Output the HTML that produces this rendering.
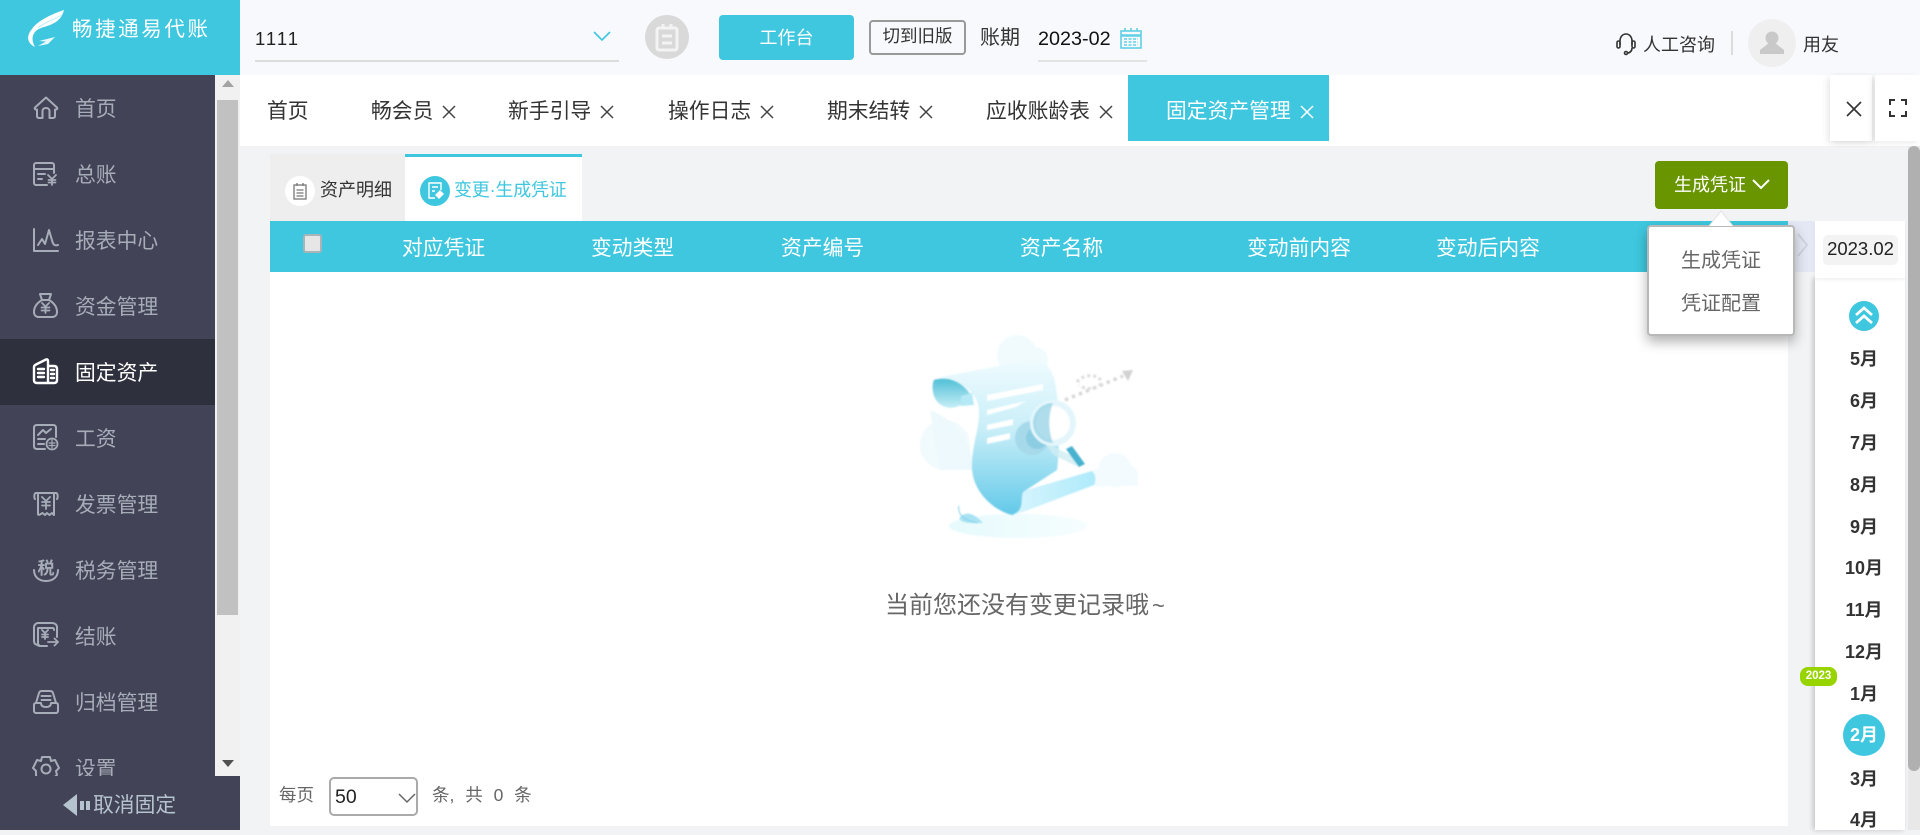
<!DOCTYPE html>
<html lang="zh"><head><meta charset="utf-8"><title>固定资产管理</title>
<style>
*{box-sizing:border-box;margin:0;padding:0}
html,body{width:1920px;height:830px;overflow:hidden;background:#f2f3f5;font-family:"Liberation Sans","Noto Sans CJK SC",sans-serif;color:#333}
.a{position:absolute}
.t{position:absolute;white-space:nowrap;line-height:30px;height:30px;font-size:20.8px}
svg{position:absolute;overflow:visible}
.m{color:#a6acb8;left:75px}
.ic{left:33px;width:26px;height:26px;fill:none;stroke:#a6acb8;stroke-width:2;stroke-linejoin:round;stroke-linecap:round}
.x{width:14px;height:14px;fill:none;stroke:#444;stroke-width:1.5}
.h{color:#fff;top:234px}
.mo{position:absolute;left:1824px;width:80px;text-align:center;font-weight:bold;font-size:18px;line-height:30px;height:30px;color:#333}
</style></head><body>
<!-- header -->
<div class="a" style="left:0;top:0;width:1920px;height:75px;background:#f8f9fd"></div>
<div class="a" style="left:0;top:0;width:240px;height:75px;background:#3ec7de"></div>
<svg style="left:0;top:0" width="240" height="75"><path d="M64 10C52 14 37 21 32 29C26 36 27 43 35 47C31 40 32 34 37 30C45 25 60 26 64 10Z" fill="#fff"/><path d="M62 15C53 20 43 23 38 28" stroke="#bfeef6" stroke-width="1" fill="none"/><path d="M55 37L39 41L46 41.500L38 46L48 44Z" fill="#eafafc"/></svg>
<div class="t" style="left:72px;top:15px;font-size:20.5px;letter-spacing:2.600px;color:#fff;">畅捷通易代账</div>
<div class="t" style="left:255px;top:24px;font-size:18.5px;letter-spacing:2px;color:#222">1111</div>
<div class="a" style="left:255px;top:60px;width:364px;height:2px;background:#dcdcdc"></div>
<svg style="left:593px;top:30px" width="18" height="12"><path d="M1 2L9 10L17 2" fill="none" stroke="#3ec7de" stroke-width="1.600"/></svg>
<div class="a" style="left:645px;top:15px;width:44px;height:44px;border-radius:50%;background:#d9d9d9"></div>
<svg style="left:654px;top:23px" width="26" height="30" fill="none" stroke="#f3f3f3" stroke-width="3"><rect x="3" y="5" width="20" height="22" rx="2"/><path d="M9 1V6M17 1V6M8 13H18M8 20H18"/></svg>
<div class="a" style="left:719px;top:15px;width:135px;height:45px;background:#3ec7de;border-radius:4px"></div>
<div class="t" style="left:719px;top:23px;width:135px;text-align:center;color:#fff;font-size:18px">工作台</div>
<div class="a" style="left:869px;top:20px;width:97px;height:35px;border:2px solid #999;border-radius:4px"></div>
<div class="t" style="left:869px;top:21px;width:97px;text-align:center;font-size:17.500px">切到旧版</div>
<div class="t" style="left:980px;top:23px;font-size:20px">账期</div>
<div class="t" style="left:1038px;top:24px;font-size:19.800px;color:#111">2023-02</div>
<svg style="left:1120px;top:27px" width="22" height="22" fill="none" stroke="#5fd0e6" stroke-width="1.600"><rect x="1" y="4" width="20" height="17"/><path d="M1 8.500H21" stroke-width="2.500"/><path d="M5 1V5M11 1V5M17 1V5M4 12H18M4 15H18M4 18H18" stroke-dasharray="3 1.500"/></svg>
<div class="a" style="left:1038px;top:60px;width:109px;height:2px;background:#e3e3e3"></div>
<svg style="left:1615px;top:32px" width="22" height="24" fill="none" stroke="#333" stroke-width="1.600"><path d="M5 13V9C5 5 7.500 2 11 2S17 5 17 9V13"/><rect x="2" y="9" width="3" height="7" rx="1.500"/><rect x="17" y="9" width="3" height="7" rx="1.500"/><path d="M17 16C17 19 15 21 12 21"/><circle cx="11" cy="21" r="1.500"/></svg>
<div class="t" style="left:1643px;top:30px;font-size:18px">人工咨询</div>
<div class="a" style="left:1731px;top:31px;width:2px;height:24px;background:#dcdcdc"></div>
<div class="a" style="left:1748px;top:19px;width:48px;height:48px;border-radius:50%;background:#efefef"></div>
<svg style="left:1758px;top:29px" width="28" height="28"><circle cx="14" cy="9" r="6.500" fill="#c9c9c9"/><path d="M11 14L2 21V25H26V21L17 14Z" fill="#c9c9c9"/></svg>
<div class="t" style="left:1803px;top:30px;font-size:18px">用友</div>

<!-- sidebar -->
<div class="a" style="left:0;top:75px;width:240px;height:755px;background:#424356"></div>
<div class="a" style="left:215px;top:75px;width:25px;height:701px;background:#f1f1f1"></div>
<div class="a" style="left:217px;top:100px;width:21px;height:515px;background:#c1c1c1"></div>
<svg style="left:221px;top:79px" width="14" height="10"><path d="M7 1L13 8H1Z" fill="#a3a3a3"/></svg>
<svg style="left:221px;top:759px" width="14" height="10"><path d="M7 8L13 1H1Z" fill="#505050"/></svg>
<div class="a" style="left:0;top:339px;width:215px;height:66px;background:#2e303e"></div>

<svg class="ic" style="top:95px"><path d="M2 12.500L13 2.500L24 12.500C25 14 23 15 22 14.500V21C22 22.500 21 23 19.500 23H16.500V16C16.500 14 15 13 13 13S9.500 14 9.500 16V23H6.500C5 23 4 22.500 4 21V14.500C3 15 1 14 2 12.500Z"/></svg>
<div class="t m" style="top:95px">首页</div>
<svg class="ic" style="top:161px"><path d="M14 24H3C2 24 1 23 1 22V4C1 3 2 2 3 2H19C20 2 21 3 21 4V12M1 8H21M5 13H12M5 18H9"/><path d="M15 14L19 18L23 14M19 18V24M15.500 19H22.500M15.500 21.500H22.500" stroke-width="1.800"/></svg>
<div class="t m" style="top:161px">总账</div>
<svg class="ic" style="top:227px"><path d="M1 2V24H25M5 18L9 12L12 17L16 3L19.500 15C20.500 18 22 19 25 18"/></svg>
<div class="t m" style="top:227px">报表中心</div>
<svg class="ic" style="top:292px"><path d="M7 2H18L16 8H9ZM9 8C4 11 1 15 1 20C1 23 3 25 6 25H19C22 25 24 23 24 20C24 15 21 11 16 8"/><path d="M9 11L12.500 14.500L16 11M12.500 14.500V21M8.500 15.500H16.500M8.500 18.500H16.500" stroke-width="1.800"/></svg>
<div class="t m" style="top:293px">资金管理</div>
<svg class="ic" style="top:358px;stroke:#fff;stroke-width:2.400"><path d="M4 25C2 25 1 24 1 22V9C1 8 2 7 3 6.500L13 1.500C14 1 15 1.500 15 3V25ZM15 8H21C23 8 24 9 24 11V22C24 24 23 25 21 25H15M5 11H11M5 15H11M5 19H11M18 12H21M18 16H21M18 20H21"/></svg>
<div class="t m" style="top:359px;color:#fff">固定资产</div>
<svg class="ic" style="top:424px"><path d="M12 25H4C2 25 1 24 1 22V4C1 2 2 1 4 1H20C22 1 23 2 23 4V13M5 11L10 6L13 9L18 5M5 15H12M5 20H11"/><circle cx="19" cy="20" r="5.500" stroke-width="1.800"/><path d="M16 19H22M16 21.500H22M19 16V24" stroke-width="1.200"/></svg>
<div class="t m" style="top:425px">工资</div>
<svg class="ic" style="top:491px"><path d="M2 8C1 7 1 2 3 2H23C25 2 25 7 24 8M5 3V23C5 24 6 24 7 23.500L9.500 22L12 24L14 22L16.500 24L19 22L21 24V3"/><path d="M9 6L13 10L17 6M13 10V18M9 11H17M9 14.500H17" stroke-width="1.800"/></svg>
<div class="t m" style="top:491px">发票管理</div>
<svg class="ic" style="top:556px" stroke-width="2.200"><path d="M1 14C1 21 6 25 13 25S25 21 25 14"/><text x="13" y="18" text-anchor="middle" font-size="17" font-weight="bold" fill="#a6acb8" stroke="none" font-family="'Noto Sans CJK SC',sans-serif">税</text></svg>
<div class="t m" style="top:557px">税务管理</div>
<svg class="ic" style="top:622px"><path d="M6 23C3 23 1 22 1 19V5C1 3 3 1 5 1H19C22 1 24 3 24 5V15M5 6H20C21 6 21 7 21 8M5 6V23C5 24 6 24 7 24H14"/><path d="M9 8L12 11L15 8M12 11V17M9 12.500H15M9 15H15M15 20H25M21.500 16.500L25 20L21.500 23.500" stroke-width="1.800"/></svg>
<div class="t m" style="top:623px">结账</div>
<svg class="ic" style="top:689px"><path d="M3 14L6 4C6.500 2.500 7.500 2 9 2H17C18.500 2 19.500 2.500 20 4L23 14M1 16C1 14.500 2 14 3 14H8C8 16.500 9.500 18 13 18S18 16.500 18 14H23C24 14 25 14.500 25 16V22C25 23 24 24 23 24H3C2 24 1 23 1 22ZM8.500 7H17.500M8.500 11H17.500"/></svg>
<div class="t m" style="top:689px">归档管理</div>
<svg class="ic" style="top:755px"><path d="M9 2H17L18 6L22 5L26 13L23 16L24 20L18 25H8L3 21L3 16L0 13L4 5L8 6Z"/><circle cx="13" cy="14" r="4.500"/></svg>
<div class="t m" style="top:755px">设置</div>

<div class="a" style="left:0;top:776px;width:240px;height:54px;background:#424356"></div>
<svg style="left:62px;top:793px" width="30" height="24"><path d="M15 1V23L1 12Z" fill="#b5c3cf"/><rect x="18" y="8" width="4" height="9" fill="#b5c3cf"/><rect x="24" y="8" width="4" height="9" fill="#b5c3cf"/></svg>
<div class="t" style="left:93px;top:791px;color:#b5c3cf">取消固定</div>

<!-- tabs -->
<div class="a" style="left:240px;top:75px;width:1680px;height:71px;background:#fff"></div>
<div class="t" style="left:267px;top:97px">首页</div>
<div class="t" style="left:371px;top:97px">畅会员</div><svg class="x" style="left:442px;top:105px"><path d="M1 1L13 13M13 1L1 13"/></svg>
<div class="t" style="left:508px;top:97px">新手引导</div><svg class="x" style="left:600px;top:105px"><path d="M1 1L13 13M13 1L1 13"/></svg>
<div class="t" style="left:668px;top:97px">操作日志</div><svg class="x" style="left:760px;top:105px"><path d="M1 1L13 13M13 1L1 13"/></svg>
<div class="t" style="left:827px;top:97px">期末结转</div><svg class="x" style="left:919px;top:105px"><path d="M1 1L13 13M13 1L1 13"/></svg>
<div class="t" style="left:986px;top:97px">应收账龄表</div><svg class="x" style="left:1099px;top:105px"><path d="M1 1L13 13M13 1L1 13"/></svg>
<div class="a" style="left:1128px;top:75px;width:201px;height:66px;background:#3ec7de"></div>
<div class="t" style="left:1166px;top:97px;color:#fff">固定资产管理</div><svg class="x" style="left:1300px;top:105px;stroke:#fff"><path d="M1 1L13 13M13 1L1 13"/></svg>
<div class="a" style="left:1830px;top:75px;width:42px;height:66px;background:#fff;box-shadow:-3px 2px 6px rgba(0,0,0,.08),3px 2px 6px rgba(0,0,0,.08)"></div>
<div class="a" style="left:1875px;top:75px;width:45px;height:66px;background:#fff;box-shadow:-3px 2px 6px rgba(0,0,0,.08)"></div>
<svg style="left:1846px;top:101px" width="16" height="16" fill="none" stroke="#333" stroke-width="1.600"><path d="M1 1L15 15M15 1L1 15"/></svg>
<svg style="left:1889px;top:99px" width="18" height="18" fill="none" stroke="#333" stroke-width="2"><path d="M1 6V1H6M12 1H17V6M17 12V17H12M6 17H1V12"/></svg>

<!-- content -->
<div class="a" style="left:270px;top:154px;width:135px;height:67px;background:#eee"></div>
<div class="a" style="left:405px;top:154px;width:177px;height:67px;background:#fff;border-top:3px solid #3ec7de"></div>
<div class="a" style="left:285px;top:176px;width:30px;height:30px;border-radius:50%;background:#fff"></div>
<svg style="left:293px;top:182px" width="14" height="18" fill="none" stroke="#777" stroke-width="1.300"><rect x="1" y="3" width="12" height="14"/><path d="M4 1V4M10 1V4M3.500 8H10.500M3.500 11H10.500M3.500 14H10.500"/></svg>
<div class="t" style="left:320px;top:175px;font-size:18px">资产明细</div>
<div class="a" style="left:420px;top:176px;width:30px;height:30px;border-radius:50%;background:#3ec7de"></div>
<svg style="left:427px;top:182px" width="17" height="18" fill="none" stroke="#fff" stroke-width="1.400"><path d="M8 16H2V1H14V8M5 5H11M5 9H8"/><path d="M9 13L13 9L16 12L12 16Z" fill="#fff"/></svg>
<div class="t" style="left:454px;top:175px;font-size:18px;letter-spacing:-.2px;color:#3ec7de">变更·生成凭证</div>
<div class="a" style="left:270px;top:221px;width:1518px;height:51px;background:#3ec7de"></div>
<div class="a" style="left:270px;top:272px;width:1518px;height:554px;background:#fff"></div>
<div class="a" style="left:303px;top:234px;width:19px;height:19px;background:#e6e6e6;border:2px solid #a9b4b8;border-radius:3px"></div>
<div class="t h" style="left:402px">对应凭证</div>
<div class="t h" style="left:591px">变动类型</div>
<div class="t h" style="left:781px">资产编号</div>
<div class="t h" style="left:1020px">资产名称</div>
<div class="t h" style="left:1247px">变动前内容</div>
<div class="t h" style="left:1436px">变动后内容</div>

<svg style="left:880px;top:320px;filter:blur(.8px)" width="300" height="240" viewBox="0 0 300 240">
<defs><linearGradient id="g" x1="0" y1="0" x2="0" y2="1"><stop offset="0" stop-color="#effbfe"/><stop offset=".45" stop-color="#c8eef8"/><stop offset="1" stop-color="#62c9e8"/></linearGradient>
<linearGradient id="r" x1="0" y1="0" x2="0" y2="1"><stop offset="0" stop-color="#4fbfd6"/><stop offset="1" stop-color="#c6eef7"/></linearGradient>
<linearGradient id="b" x1="0" y1="0" x2="1" y2="0"><stop offset="0" stop-color="#d9f5fd"/><stop offset="1" stop-color="#aeeafb"/></linearGradient>
<linearGradient id="s" x1="0" y1="0" x2="1" y2="0"><stop offset="0" stop-color="#e6fafc"/><stop offset="1" stop-color="#f6fdfe"/></linearGradient></defs>
<ellipse cx="138" cy="206" rx="69" ry="12" fill="url(#s)"/>
<circle cx="137" cy="35" r="20" fill="#f1fbfe"/><circle cx="155" cy="40" r="13" fill="#f1fbfe"/>
<ellipse cx="65" cy="125" rx="25" ry="25" fill="#f1fafd"/><path d="M50 90C75 100 90 120 95 150H60Z" fill="#edf9fc"/>
<circle cx="235" cy="150" r="17" fill="#f3fbfe"/><circle cx="218" cy="158" r="9" fill="#f3fbfe"/><circle cx="248" cy="155" r="10" fill="#f3fbfe"/><rect x="215" y="155" width="43" height="11" fill="#f3fbfe"/>
<path d="M140 172L212 151C216 155 216 160 214 165L143 192L132 195Z" fill="url(#b)"/>
<path d="M55 58L150 40C165 39 172 48 175 62C180 90 180 125 177 150L143 172C140 180 145 190 132 195C112 190 92 170 92 147C92 120 102 105 98 84C94 68 70 55 55 58Z" fill="url(#g)"/>
<path d="M54 60C70 55 86 65 91 76L81 78L81 85C68 92 55 85 53 72C52 66 53 62 54 60Z" fill="url(#r)"/>
<path d="M81 76L92 73L94 85L81 86Z" fill="#b5e9f6"/>
<path d="M107 75L163 64V70L107 81ZM107 90L146 81L136 87L107 95ZM107 105L133 99V105L107 110ZM107 118L130 113V119L107 124Z" fill="#fff"/>
<circle cx="152" cy="118" r="17" fill="#a6d9ea"/><circle cx="157" cy="118" r="11" fill="#8ccde2"/>
<path d="M165 122L192 136L198 147L180 138C172 136 170 130 165 122Z" fill="#cfecf2" opacity=".8"/>
<path d="M192 126L205 144L199 147L186 129Z" fill="#49b2cf"/>
<circle cx="173" cy="103" r="20" fill="#fff" stroke="#e4f6fb" stroke-width="6"/>
<path d="M173 83A20 20 0 0 0 173 123C168 110 168 95 173 83Z" fill="#8dcfe3" opacity=".7"/>
<path d="M185 80L243 56" stroke="#d8d8d8" stroke-width="3.500" stroke-dasharray="3.500 4" fill="none"/>
<path d="M197 62C205 52 222 55 221 63C218 70 205 70 199 65" stroke="#ddd" stroke-width="3" stroke-dasharray="3 3" fill="none"/>
<path d="M242 51L253 50L248 61Z" fill="#d2d2d2"/>
<path d="M80 197C88 190 95 195 103 203L90 203C82 202 78 200 80 197Z" fill="#a8e2f3"/><path d="M79 186C77 194 84 200 97 203" stroke="#82d2ea" stroke-width="1" fill="none"/>
</svg>
<div class="t" style="left:885px;top:591px;font-size:24px;color:#666">当前您还没有变更记录哦<span style="font-size:22px;margin-left:3px">~</span></div>

<div class="t" style="left:279px;top:780px;font-size:17.500px;color:#666">每页</div>
<div class="a" style="left:329px;top:777px;width:89px;height:39px;border:2px solid #aaa;border-radius:5px;background:#fff"></div>
<div class="t" style="left:335px;top:782px;font-size:19.500px;color:#222">50</div>
<svg style="left:398px;top:792px" width="18" height="12"><path d="M1 2L9 10L17 2" fill="none" stroke="#666" stroke-width="1.500"/></svg>
<div class="t" style="left:432px;top:780px;font-size:17.500px;color:#666;word-spacing:6px">条, 共 0 条</div>

<!-- generate button & dropdown -->
<div class="a" style="left:1655px;top:161px;width:133px;height:48px;background:#689500;border-radius:4px"></div>
<div class="t" style="left:1674px;top:170px;font-size:18px;color:#fff">生成凭证</div>
<svg style="left:1752px;top:178px" width="18" height="12"><path d="M1 2L9 10L17 2" fill="none" stroke="#fff" stroke-width="2"/></svg>

<div class="a" style="left:1788px;top:221px;width:28px;height:51px;background:#e4e8f4"></div>
<svg style="left:1796px;top:232px" width="14" height="26"><path d="M2 2L11 13L2 24" fill="none" stroke="#cfd3df" stroke-width="2"/></svg>
<div class="a" style="left:1815px;top:278px;width:90px;height:552px;background:#fff;box-shadow:-2px 0 5px rgba(0,0,0,.2)"></div>
<div class="a" style="left:1815px;top:221px;width:90px;height:57px;background:#fff;box-shadow:0 2px 3px rgba(0,0,0,.06)"></div>
<div class="a" style="left:1823px;top:235px;width:75px;height:30px;background:#f3f3f3;border-radius:5px"></div>
<div class="t" style="left:1823px;top:234px;width:75px;text-align:center;font-size:18.500px;color:#222">2023.02</div>

<div class="a" style="left:1647px;top:225px;width:148px;height:111px;background:#fff;border:2px solid #b8b8b8;border-radius:4px;box-shadow:0 6px 12px rgba(0,0,0,.3)"></div>
<svg style="left:1708px;top:210px" width="26" height="17"><path d="M1 16L13 1L25 16" fill="#fff" stroke="#e2e2e2" stroke-width="1"/></svg>
<div class="t" style="left:1681px;top:246px;font-size:20px;color:#666">生成凭证</div>
<div class="t" style="left:1681px;top:289px;font-size:20px;color:#666">凭证配置</div>

<div class="a" style="left:1849px;top:301px;width:30px;height:30px;border-radius:50%;background:#3ec7de"></div>
<svg style="left:1854px;top:306px" width="20" height="20" fill="none" stroke="#fff" stroke-width="2.800"><path d="M2 9L10 2L18 9M2 17L10 10L18 17"/></svg>
<div class="mo" style="top:344px">5月</div>
<div class="mo" style="top:386px">6月</div>
<div class="mo" style="top:428px">7月</div>
<div class="mo" style="top:470px">8月</div>
<div class="mo" style="top:512px">9月</div>
<div class="mo" style="top:553px">10月</div>
<div class="mo" style="top:595px">11月</div>
<div class="mo" style="top:637px">12月</div>
<div class="mo" style="top:679px">1月</div>
<div class="a" style="left:1843px;top:714px;width:42px;height:42px;border-radius:50%;background:#3ec7de"></div>
<div class="mo" style="top:720px;color:#fff">2月</div>
<div class="mo" style="top:764px">3月</div>
<div class="mo" style="top:805px">4月</div>
<div class="a" style="left:1800px;top:667px;width:37px;height:19px;border-radius:8px;background:#97d400"></div>
<div class="t" style="left:1800px;top:667px;width:37px;height:19px;line-height:19px;text-align:center;font-size:11.500px;font-weight:bold;color:#fff">2023</div>

<div class="a" style="left:1908px;top:146px;width:12px;height:684px;background:#e8e8e8"></div>
<div class="a" style="left:1908px;top:146px;width:12px;height:625px;background:#b0b0b0;border-radius:6px"></div>
</body></html>
